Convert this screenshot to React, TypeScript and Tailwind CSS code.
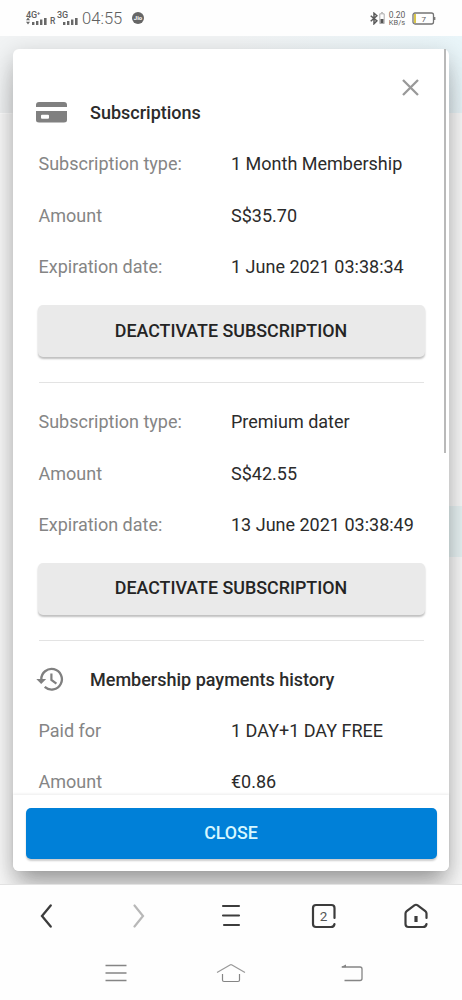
import type { ReactNode } from 'react';

interface DetailRowProps {
  label: string;
  value: string;
}

function DetailRow({ label, value }: DetailRowProps) {
  return (
    <div className="grid h-[51.4px] grid-cols-2 items-center whitespace-nowrap">
      <span className="text-[#858585]">{label}</span>
      <span className="text-[#2b2b2b]">{value}</span>
    </div>
  );
}

interface SectionTitleProps {
  icon: ReactNode;
  children: ReactNode;
}

function SectionTitle({ icon, children }: SectionTitleProps) {
  return (
    <div className="flex h-[51px] items-center">
      <div className="-ml-[2.5px] w-[54px] text-[#808080]">{icon}</div>
      <h2 className="font-medium text-[#2b2b2b]">{children}</h2>
    </div>
  );
}

interface SubscriptionProps {
  type: string;
  amount: string;
  expires: string;
}

function Subscription({ type, amount, expires }: SubscriptionProps) {
  return (
    <section className="h-[257.8px]">
      <DetailRow label="Subscription type:" value={type} />
      <DetailRow label="Amount" value={amount} />
      <DetailRow label="Expiration date:" value={expires} />
      <button className="-ml-[1px] mt-[12.5px] h-[52px] w-[387px] rounded-[5px] bg-[#eaeaea] text-[17.85px] font-medium text-[#242424] shadow-[0_2px_2px_rgba(0,0,0,0.25)]">
        DEACTIVATE SUBSCRIPTION
      </button>
      <div className="mt-[25px] h-px bg-[#e3e3e3]" />
    </section>
  );
}

function SignalBars() {
  return (
    <svg width="15" height="8" viewBox="0 0 15 8" fill="#686868">
      <rect x="0" y="5" width="2.4" height="3" />
      <rect x="4" y="4" width="2.4" height="4" />
      <rect x="8" y="2.5" width="2.4" height="5.5" />
      <rect x="12" y="1" width="2.6" height="7" />
    </svg>
  );
}

function StatusBar() {
  return (
    <header className="flex h-9 items-start bg-[#fefefe] pl-[26px] text-[#606060]">
      <div className="mt-[11px] w-[23px]">
        <div className="h-[6px] text-[9px] leading-[8px] font-medium tracking-tight whitespace-nowrap">4G⁺</div>
        <div className="flex items-end gap-[2px]">
          <svg width="4" height="8" viewBox="0 0 4 8" fill="#686868">
            <path d="M0 3.2 2 .5l2 2.7zM0 4.8h4L2 7.5z" />
          </svg>
          <SignalBars />
        </div>
      </div>
      <span className="mt-[17px] ml-[1px] w-[6px] text-[8.5px] leading-[8px] font-medium">R</span>
      <div className="mt-[11px] ml-[1px] w-[25px]">
        <div className="h-[6px] text-[9px] leading-[8px] font-medium">3G</div>
        <div className="pl-[6px]">
          <SignalBars />
        </div>
      </div>
      <span className="mt-[9px] w-[42px] text-[16.6px] leading-5 font-light">04:55</span>
      <div className="mt-[12px] ml-[8px] flex h-[12px] w-[12px] items-center justify-center rounded-full bg-[#666] text-[6px] leading-none font-bold text-white">
        Jio
      </div>
      <div className="mt-[12px] ml-[226px] flex">
        <svg width="8" height="13" viewBox="0 0 8 13" fill="none" stroke="#5b5b5b" strokeWidth="1.5">
          <path d="m.7 3.7 6.2 5.2L4 11.8V1.2l2.9 2.6L.7 9.2" />
        </svg>
        <svg className="ml-[1px]" width="6" height="13" viewBox="0 0 6 13">
          <path d="M2 .7h2M.8 1.8h4.4v9.7H.8z" fill="none" stroke="#999" strokeWidth=".8" />
          <rect x="1.5" y="7" width="3" height="4" fill="#555" />
        </svg>
      </div>
      <div className="mt-[11px] ml-[3px] flex w-[18px] flex-col items-center leading-[8px] whitespace-nowrap">
        <span className="text-[8.5px]">0.20</span>
        <span className="text-[7.5px]">KB/s</span>
      </div>
      <svg className="mt-[12px] ml-[6px]" width="24" height="14" viewBox="0 0 24 14">
        <rect x="1" y="1" width="20.5" height="11" rx="2" fill="none" stroke="#747474" strokeWidth="1.3" />
        <rect x="2" y="2" width="2" height="9" fill="#d9c64b" />
        <path d="M22.7 5v3" stroke="#747474" strokeWidth="1.3" />
        <text x="11.7" y="9.5" textAnchor="middle" fontSize="8" fill="#606060">
          7
        </text>
      </svg>
    </header>
  );
}

function CardIcon() {
  return (
    <svg width="31" height="21" viewBox="0 0 31 21" fill="currentColor">
      <path d="M3 0h25q3 0 3 3v2H0V3q0-3 3-3z" />
      <path
        fillRule="evenodd"
        d="M0 9h31v9q0 2.5-3 2.5H3Q0 20.5 0 18zM6 12.7h6q1 0 1 1v2q0 1-1 1H6q-1 0-1-1v-2q0-1 1-1z"
      />
    </svg>
  );
}

function HistoryIcon() {
  return (
    <svg className="mt-[1px]" width="28" height="25" viewBox="0 0 28 25" fill="none" stroke="currentColor">
      <path d="M5.3 12.500a10.300 10.300 0 1 1 3.400 7.400" strokeWidth="2.3" />
      <path d="M.3 12h9.900L5.200 17z" fill="currentColor" stroke="none" />
      <path d="M15.400 6.500V13l5 3.700" strokeWidth="2.2" />
    </svg>
  );
}

function BrowserBar() {
  return (
    <nav className="flex h-[62px] items-center border-t border-[#e2e2e2] bg-[#fefefe] text-[#3c3c3c]">
      <svg className="ml-[40px]" width="14" height="24" viewBox="0 0 14 24" fill="none" stroke="currentColor" strokeWidth="2.3" strokeLinecap="round">
        <path d="M10.700 1.500 2 12l8.700 10.500" />
      </svg>
      <svg className="ml-[77px]" width="14" height="24" viewBox="0 0 14 24" fill="none" stroke="#b8b8b8" strokeWidth="2.2" strokeLinecap="round">
        <path d="M3.500 1.500 12 12 3.500 22.500" />
      </svg>
      <svg className="ml-[76px]" width="20" height="24" viewBox="0 0 20 24" stroke="currentColor" strokeWidth="2.1" strokeLinecap="round">
        <path d="M2 2h16M2 11.500h16M3 21h15" />
      </svg>
      <svg className="ml-[70px]" width="26" height="26" viewBox="0 0 26 26" fill="none" stroke="currentColor" strokeWidth="2.2" strokeLinecap="round">
        <path d="M23.500 15V5q0-3-3-3H5Q2 2 2 5v16q0 3 3 3h15q3 0 3.500-3" />
        <text x="12.5" y="17.5" textAnchor="middle" fontSize="13.5" fill="#555" stroke="none">
          2
        </text>
      </svg>
      <svg className="ml-[66px]" width="26" height="26" viewBox="0 0 26 26" fill="none" stroke="currentColor" strokeWidth="2.2" strokeLinecap="round">
        <path d="M23.500 15v-4.500q0-1.500-1.200-2.400L14.700 2.300q-1.700-1.100-3.400 0L3.700 8.100q-1.200.9-1.200 2.400V21q0 3 3 3h14.500q3 0 3.500-3" />
        <path d="M13 13v6" strokeWidth="3.2" strokeLinecap="butt" />
      </svg>
    </nav>
  );
}

function SystemNav() {
  return (
    <nav className="flex h-[54px] items-center bg-[#fefefe] text-[#858585]">
      <svg className="ml-[104px]" width="24" height="20" viewBox="0 0 24 20" stroke="currentColor" strokeWidth="1.4">
        <path d="M1.500 2.500h21M1.500 10h21M1.500 17.500h21" />
      </svg>
      <svg className="ml-[88px]" width="30" height="20" viewBox="0 0 30 20" fill="none" stroke="currentColor" strokeWidth="1.2">
        <path d="M1 9.500 14 2q1-.6 2 0l13 7.500" stroke="#999" />
        <path d="M6.500 11v6q0 1.500 1.500 1.500h14q1.500 0 1.500-1.500v-6" />
      </svg>
      <svg className="ml-[94px]" width="24" height="20" viewBox="0 0 24 20" fill="none" stroke="currentColor" strokeWidth="1.3">
        <path d="M2 4h18q2 0 2 2v9.500q0 2-2 2H4.500" />
        <path d="M.5 4.300 6 1.500v2.800z" fill="currentColor" stroke="none" />
      </svg>
    </nav>
  );
}

export default function App() {
  return (
    <div className="flex h-[1000px] w-[462px] flex-col overflow-hidden bg-[#fefefe] font-['Roboto','Liberation_Sans',sans-serif]">
      <StatusBar />
      <main className="relative h-[848px] overflow-hidden bg-[#fafafa] px-[13px] pt-[13px]">
        {/* dimmed page behind the dialog */}
        <div className="absolute top-0 left-0 h-[77px] w-full bg-linear-to-r from-[#f1f3f4] via-[#f1f3f4] to-[#e9f5f9]" />
        <div className="absolute top-[77px] left-0 h-px w-3 bg-white" />
        <div className="absolute top-[470px] right-0 h-[51px] w-4 bg-[#e9f4f5]" />
        <div className="relative flex h-[822px] w-[436px] flex-col rounded-[6px] bg-white shadow-[0_14px_19px_-9px_rgba(0,0,0,0.2),0_28px_32px_0px_rgba(0,0,0,0.13),0_6px_22px_2px_rgba(0,0,0,0.16)]">
          <div className="relative h-[746px] overflow-hidden px-[25.5px] pt-[38.3px] text-[18px]">
            <button aria-label="Close" className="absolute top-[30px] right-[30px] text-[#999]">
              <svg width="17" height="17" viewBox="0 0 17 17" stroke="currentColor" strokeWidth="2.3">
                <path d="m1 1 15 15M16 1 1 16" />
              </svg>
            </button>
            <div className="absolute top-0 right-[3px] h-[404px] w-[2px] bg-[#b9b9b9]" />
            <SectionTitle icon={<CardIcon />}>Subscriptions</SectionTitle>
            <Subscription type="1 Month Membership" amount="S$35.70" expires="1 June 2021 03:38:34" />
            <Subscription type="Premium dater" amount="S$42.55" expires="13 June 2021 03:38:49" />
            <SectionTitle icon={<HistoryIcon />}>Membership payments history</SectionTitle>
            <DetailRow label="Paid for" value="1 DAY+1 DAY FREE" />
            <DetailRow label="Amount" value="€0.86" />
          </div>
          <footer className="relative h-[76px] rounded-b-[6px] bg-white px-[12.5px] pt-[13px] shadow-[0_-1px_3px_rgba(0,0,0,0.08)]">
            <button className="h-[51px] w-[411px] rounded-[5px] bg-[#0080d8] text-[17.8px] font-medium text-[#d6f7ff] shadow-[0_2px_2px_rgba(0,0,0,0.2)]">
              CLOSE
            </button>
          </footer>
        </div>
      </main>
      <BrowserBar />
      <SystemNav />
    </div>
  );
}
